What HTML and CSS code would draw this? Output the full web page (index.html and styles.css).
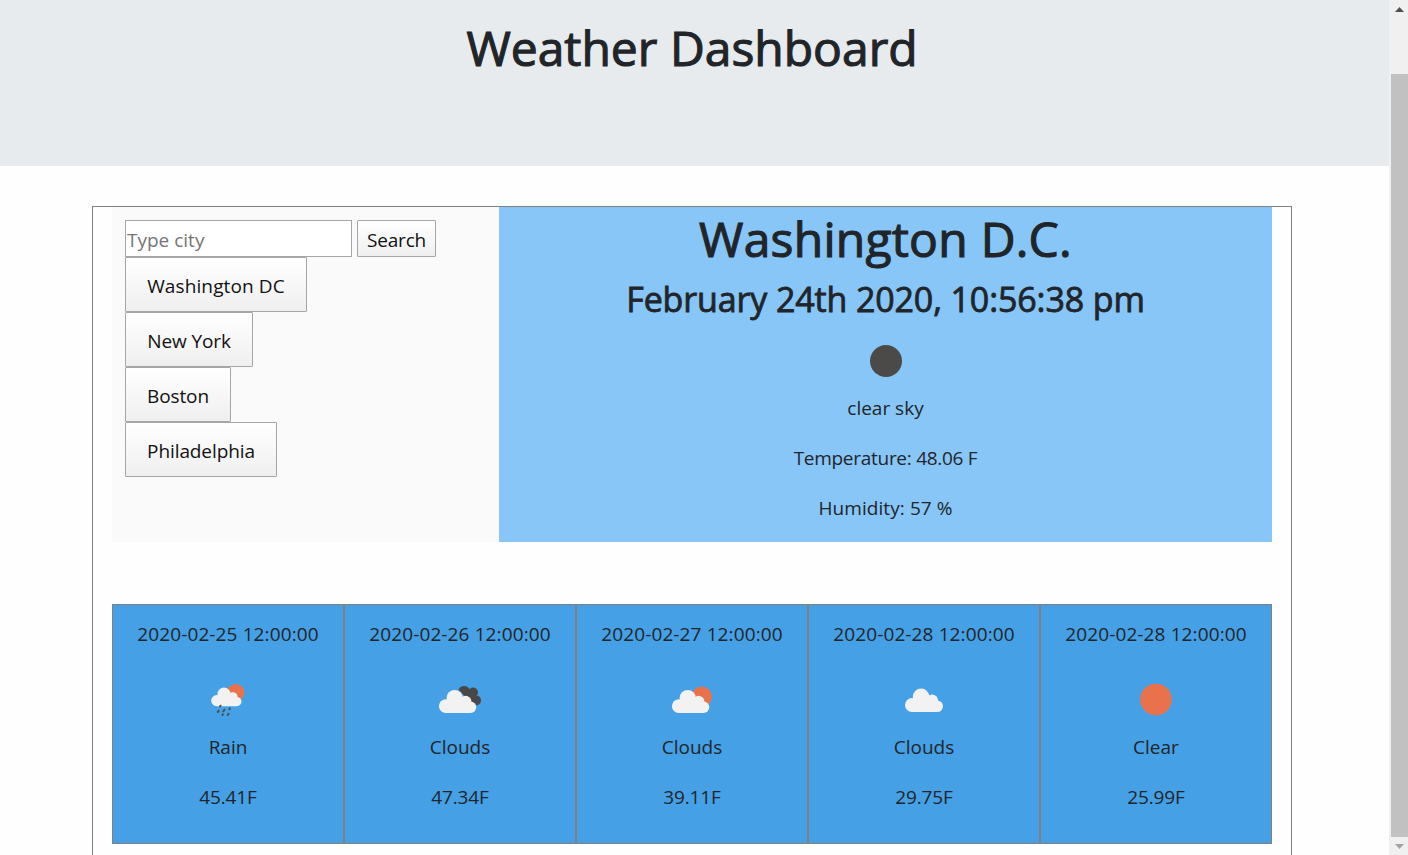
FILE: index.html
```
<!DOCTYPE html>
<html lang="en">
<head>
<meta charset="utf-8">
<title>Weather Dashboard</title>
<link rel="stylesheet" href="styles.css">
</head>
<body>
<svg class="defs" aria-hidden="true">
  <defs>
    <g id="cloud">
      <circle cx="15.800" cy="31.100" r="6.900"/>
      <circle cx="24.700" cy="23" r="8.100"/>
      <circle cx="35.600" cy="26.500" r="5.800"/>
      <circle cx="40.600" cy="32.300" r="5.700"/>
      <path d="M15.800 25H33L40 28V38H15.800z"/>
    </g>
  </defs>
</svg>
<div class="page">
  <header class="banner"><h1 class="title">Weather Dashboard</h1></header>
  <main class="board">
    <section class="top">
      <div class="side">
        <form class="search">
          <input class="field" type="text" placeholder="Type city">
          <button class="btn go" type="button">Search</button>
        </form>
        <button class="btn city dc" type="button">Washington DC</button>
        <button class="btn city ny" type="button">New York</button>
        <button class="btn city bos" type="button">Boston</button>
        <button class="btn city phl" type="button">Philadelphia</button>
      </div>
      <div class="current">
        <h1 class="place">Washington D.C.</h1>
        <h2 class="when">February 24th 2020, 10:56:38 pm</h2>
        <svg class="icon" viewBox="0 0 60 50"><circle cx="30" cy="26" r="16" fill="#4b4a48"/></svg>
        <p class="sky">clear sky</p>
        <p class="temp">Temperature: 48.06 F</p>
        <p class="hum">Humidity: 57 %</p>
      </div>
    </section>
    <section class="forecast">
      <article class="day">
        <p class="date">2020-02-25 12:00:00</p>
        <svg class="icon" viewBox="0 0 60 50">
          <circle cx="37.700" cy="17.700" r="8.700" fill="#e9724d"/>
          <use href="#cloud" fill="#f2f2f2" transform="translate(6 .400) scale(.81)"/>
          <path d="M23.500 30.700l-.4.600M21.700 35.700l-.8 1.200M27.400 34.700l-1 1.600M32.800 33.400l-.3.900M25.800 39.400l-.3.600M31.600 38.700l-.9 1.300" transform="translate(-1 0)" fill="none" stroke="#484e50" stroke-width="2" stroke-linecap="round"/>
        </svg>
        <p class="cond">Rain</p>
        <p class="deg">45.41F</p>
      </article>
      <article class="day">
        <p class="date">2020-02-26 12:00:00</p>
        <svg class="icon" viewBox="0 0 60 50">
          <path d="M28.500 14.500a6.200 6.200 0 0 1 11-.3a4.800 4.800 0 0 1 7.300 6.300a5 5 0 0 1 .7 9.700l-5.500-1z" fill="#484848"/>
          <use href="#cloud" fill="#f2f2f2"/>
        </svg>
        <p class="cond">Clouds</p>
        <p class="deg">47.34F</p>
      </article>
      <article class="day">
        <p class="date">2020-02-27 12:00:00</p>
        <svg class="icon" viewBox="0 0 60 50">
          <circle cx="39.600" cy="21.800" r="10.200" fill="#e9724d"/>
          <use href="#cloud" fill="#f2f2f2" x="1"/>
        </svg>
        <p class="cond">Clouds</p>
        <p class="deg">39.11F</p>
      </article>
      <article class="day">
        <p class="date">2020-02-28 12:00:00</p>
        <svg class="icon" viewBox="0 0 60 50">
          <use href="#cloud" fill="#f2f2f2" transform="translate(2 -1.500) scale(1.015)"/>
        </svg>
        <p class="cond">Clouds</p>
        <p class="deg">29.75F</p>
      </article>
      <article class="day">
        <p class="date">2020-02-28 12:00:00</p>
        <svg class="icon" viewBox="0 0 60 50"><circle cx="30" cy="24.500" r="15.800" fill="#e9724d"/></svg>
        <p class="cond">Clear</p>
        <p class="deg">25.99F</p>
      </article>
    </section>
  </main>
</div>
<aside class="scrollbar">
  <svg class="arrow" viewBox="0 0 9 5"><path d="M0 5L4.500 0L9 5z" fill="#505050"/></svg>
  <div class="thumb"></div>
  <svg class="arrow" viewBox="0 0 9 5"><path d="M0 0L4.500 5L9 0z" fill="#a3a3a3"/></svg>
</aside>
</body>
</html>
```
FILE: styles.css
```
* { box-sizing: border-box; }
body {
  margin: 0;
  height: 855px;
  overflow: hidden;
  display: flex;
  background: #fefefe;
  color: #212529;
  font: 19px/30px "Segoe UI", "Open Sans", "Noto Sans", sans-serif;
}
h1, h2, p { margin: 0; white-space: nowrap; }
.defs { display: none; }
.page { width: 1389px; height: 855px; overflow: hidden; }
.banner { height: 166px; padding: 18px 5px 0 0; background: #e7ebee; text-align: center; }
.title, .place { font-size: 48px; line-height: 60px; font-weight: 500; -webkit-text-stroke: 1.1px #212529; }
.place { letter-spacing: .25px; }
.board {
  width: 1200px;
  height: 700px;
  margin: 40px 0 0 92px;
  padding: 0 19px;
  border: 1px solid #808080;
}
.top { display: flex; height: 335px; }
.side {
  width: 387px;
  padding: 13px;
  background: #fafafa;
  display: flex;
  flex-direction: column;
  align-items: flex-start;
}
.search { display: flex; gap: 5px; height: 37px; }
.field {
  width: 227px;
  padding: 2px 1px 0;
  border: 1px solid #a6a6a6;
  background: #fff;
  font: inherit;
}
.field::placeholder { color: #757575; opacity: 1; }
.btn {
  border: 1px solid #a6a6a6;
  border-radius: 1px;
  background: linear-gradient(#fff, #efefef);
  color: #111;
  font: inherit;
  padding: 3px 0 0;
  white-space: nowrap;
}
.go { width: 79px; letter-spacing: -.2px; }
.city { height: 55px; }
.dc { width: 182px; letter-spacing: .12px; }
.ny { width: 128px; letter-spacing: -.1px; }
.bos { width: 106px; letter-spacing: -.1px; }
.phl { width: 152px; letter-spacing: -.1px; }
.current {
  width: 773px;
  padding-top: 2px;
  background: #87c6f7;
  display: flex;
  flex-direction: column;
  align-items: center;
}
.when {
  font-size: 34px;
  line-height: 42px;
  margin-top: 9px;
  font-weight: 500;
  letter-spacing: -.13px;
  -webkit-text-stroke: .8px #212529;
}
.icon { width: 60px; height: 50px; flex: none; display: block; }
.current .icon { margin-top: 15px; }
.current p { margin-bottom: 20px; }
.current .sky { margin-top: 8px; }
.temp { letter-spacing: -.28px; }
.hum { letter-spacing: .08px; }
.forecast {
  margin-top: 62px;
  height: 240px;
  display: grid;
  grid-template-columns: repeat(5, 1fr);
}
.day {
  border: 1px solid #808080;
  background: #45a0e5;
  padding-top: 14px;
  display: flex;
  flex-direction: column;
  align-items: center;
}
.date { letter-spacing: .12px; }
.deg { letter-spacing: -.15px; }
.day .icon { margin: 26px 0 7px; }
.cond { margin-bottom: 20px; }
.scrollbar {
  width: 19px;
  padding: 7px 0 6px 2px;
  background: #f0f0f0;
  display: flex;
  flex-direction: column;
  align-items: center;
}
.arrow { width: 9px; height: 5px; flex: none; }
.thumb { width: 17px; height: 763px; margin: 62px 0 7px; background: #c1c1c1; }
```
